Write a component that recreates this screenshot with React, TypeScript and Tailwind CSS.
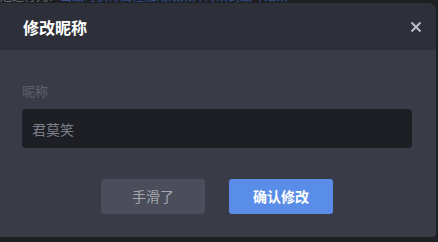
import { useState } from 'react'

export default function App() {
  const [nickname, setNickname] = useState('')

  return (
    <div
      className="w-[438px] h-[242px] bg-[#1e1f23] overflow-hidden flex flex-col"
      style={{ fontFamily: '"Noto Sans CJK SC", "Noto Sans", sans-serif' }}
    >
      <div className="h-[3px] overflow-hidden relative shrink-0">
        <p className="absolute left-0 top-[-10px] text-[12px] leading-[12px] whitespace-nowrap text-[#6a6d75]">
          厄运符咒：<span className="text-[#34508f]">出战时获得属性加成效果并持续到战斗结束</span>
        </p>
      </div>
      <div className="w-[436px] h-[234px] rounded-tr-lg rounded-br-sm overflow-hidden flex flex-col bg-[#393c46]">
        <div className="h-[47px] shrink-0 bg-[#2e3039] flex items-center justify-between pl-[23px] pr-[12px]">
          <h1 className="text-[16px] font-bold text-white">修改昵称</h1>
          <button className="w-4 h-4 flex items-center justify-center text-[#b9bdc7]">
            <svg width="12" height="12" viewBox="0 0 12 12" fill="none">
              <path d="M1.5 1.5 10.5 10.5M10.5 1.5 1.5 10.5" stroke="currentColor" strokeWidth="2" />
            </svg>
          </button>
        </div>
        <div className="flex-1 flex flex-col pt-[32px] pl-[22px] pr-[24px]">
          <label className="text-[13px] leading-[18px] text-[#5e626d]">昵称</label>
          <input
            value={nickname}
            onChange={(e) => setNickname(e.target.value)}
            placeholder="君莫笑"
            className="mt-[9px] h-[39px] w-full rounded bg-[#1e1f24] px-[10px] text-[14px] text-[#d0d2d8] placeholder:text-[#7a7e88] focus:outline-none"
          />
          <div className="mt-[31px] flex justify-center gap-[24px]">
            <button className="w-[104px] h-[35px] rounded-[3px] bg-[#4b4e5a] text-[14px] text-[#a3a6ae]">
              手滑了
            </button>
            <button className="w-[104px] h-[35px] rounded-[3px] bg-[#5a8de8] text-[14px] font-bold text-white">
              确认修改
            </button>
          </div>
        </div>
      </div>
    </div>
  )
}
